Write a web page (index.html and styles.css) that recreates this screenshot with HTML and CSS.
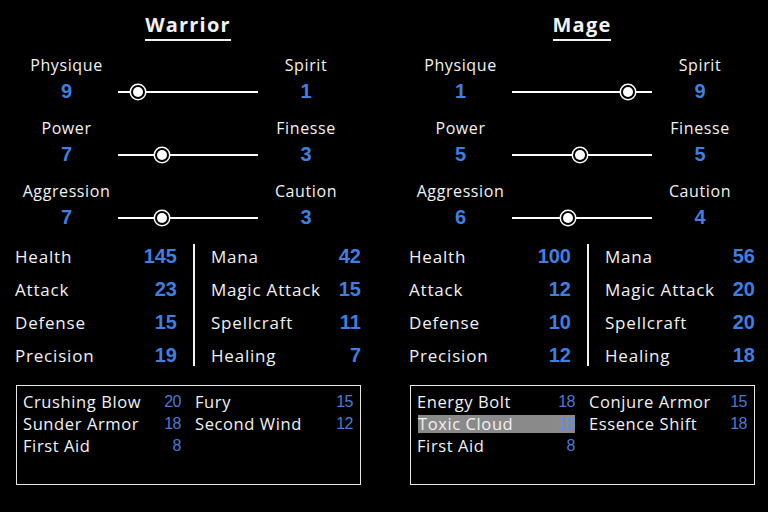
FILE: index.html
```html
<!DOCTYPE html>
<html>
<head>
    <meta name="viewport" content="width=device-width, initial-scale=1.0">
    <title>Class Compare</title>
    <link rel="stylesheet" href="styles.css">
</head>
<body>
    <div class="compare">

        <!-- Warrior -->
        <div class="panel">
            <div class="title"><span>Warrior</span></div>

            <div class="traits">
                <div class="name">Physique</div><div></div><div class="name">Spirit</div>
                <div class="num">9</div>
                <div class="track"><div class="knob" style="left: 14.2%"></div></div>
                <div class="num">1</div>

                <div class="name">Power</div><div></div><div class="name">Finesse</div>
                <div class="num">7</div>
                <div class="track"><div class="knob" style="left: 31.4%"></div></div>
                <div class="num">3</div>

                <div class="name">Aggression</div><div></div><div class="name">Caution</div>
                <div class="num">7</div>
                <div class="track"><div class="knob" style="left: 31.4%"></div></div>
                <div class="num">3</div>
            </div>

            <div class="stats">
                <div class="col">
                    <div class="stat"><span>Health</span><b>145</b></div>
                    <div class="stat"><span>Attack</span><b>23</b></div>
                    <div class="stat"><span>Defense</span><b>15</b></div>
                    <div class="stat"><span>Precision</span><b>19</b></div>
                </div>
                <div class="divider"></div>
                <div class="col">
                    <div class="stat"><span>Mana</span><b>42</b></div>
                    <div class="stat"><span>Magic Attack</span><b>15</b></div>
                    <div class="stat"><span>Spellcraft</span><b>11</b></div>
                    <div class="stat"><span>Healing</span><b>7</b></div>
                </div>
            </div>

            <div class="skills">
                <div class="skill"><span>Crushing Blow</span><b>20</b></div>
                <div class="skill"><span>Fury</span><b>15</b></div>
                <div class="skill"><span>Sunder Armor</span><b>18</b></div>
                <div class="skill"><span>Second Wind</span><b>12</b></div>
                <div class="skill"><span>First Aid</span><b>8</b></div>
            </div>
        </div>

        <!-- Mage -->
        <div class="panel">
            <div class="title"><span>Mage</span></div>

            <div class="traits">
                <div class="name">Physique</div><div></div><div class="name">Spirit</div>
                <div class="num">1</div>
                <div class="track"><div class="knob" style="left: 83%"></div></div>
                <div class="num">9</div>

                <div class="name">Power</div><div></div><div class="name">Finesse</div>
                <div class="num">5</div>
                <div class="track"><div class="knob" style="left: 48.6%"></div></div>
                <div class="num">5</div>

                <div class="name">Aggression</div><div></div><div class="name">Caution</div>
                <div class="num">6</div>
                <div class="track"><div class="knob" style="left: 40%"></div></div>
                <div class="num">4</div>
            </div>

            <div class="stats">
                <div class="col">
                    <div class="stat"><span>Health</span><b>100</b></div>
                    <div class="stat"><span>Attack</span><b>12</b></div>
                    <div class="stat"><span>Defense</span><b>10</b></div>
                    <div class="stat"><span>Precision</span><b>12</b></div>
                </div>
                <div class="divider"></div>
                <div class="col">
                    <div class="stat"><span>Mana</span><b>56</b></div>
                    <div class="stat"><span>Magic Attack</span><b>20</b></div>
                    <div class="stat"><span>Spellcraft</span><b>20</b></div>
                    <div class="stat"><span>Healing</span><b>18</b></div>
                </div>
            </div>

            <div class="skills">
                <div class="skill"><span>Energy Bolt</span><b>18</b></div>
                <div class="skill"><span>Conjure Armor</span><b>15</b></div>
                <div class="skill selected"><span>Toxic Cloud</span><b>18</b></div>
                <div class="skill"><span>Essence Shift</span><b>18</b></div>
                <div class="skill"><span>First Aid</span><b>8</b></div>
            </div>
        </div>

    </div>
</body>
</html>
```

FILE: styles.css
```css
body {
    margin: 0;
    background-color: #000;
    color: #f2f2f2;
    font-family: "Open Sans", "DejaVu Sans", sans-serif;
}

.compare {
    display: grid;
    grid-template-columns: 346px 346px;
    column-gap: 48px;
    padding: 12px 0 0 15px;
}

/* Class name heading */
.title {
    text-align: center;
    font-size: 20px;
    font-weight: bold;
    letter-spacing: 1.2px;
    line-height: 26px;
}

.title span {
    display: inline-block;
    padding-bottom: 1px;
    border-bottom: 2px solid #f2f2f2;
}

/* Trait sliders: name row, then value row with the track */
.traits {
    display: grid;
    grid-template-columns: 103px 140px 96px;
    grid-auto-rows: 22px 41px;
    margin-top: 13px;
}

.traits .name {
    text-align: center;
    font-size: 16px;
    letter-spacing: 0.6px;
    line-height: 22px;
}

.traits .num {
    text-align: center;
    font-family: "Liberation Sans", Arial, sans-serif;
    font-weight: bold;
    font-size: 20px;
    line-height: 30px;
    color: #3f7fe0;
}

.track {
    position: relative;
    align-self: start;
    height: 2px;
    margin-top: 15px;
    background-color: #fff;
}

.knob {
    position: absolute;
    top: 50%;
    width: 10px;
    height: 10px;
    border-radius: 50%;
    background-color: #fff;
    box-shadow: 0 0 0 2px #000, 0 0 0 3.5px #fff;
    transform: translate(-50%, -50%);
}

/* Derived stats */
.stats {
    display: grid;
    grid-template-columns: 162px 2px 1fr;
    column-gap: 16px;
    margin-top: -3px;
}

.stat {
    display: flex;
    justify-content: space-between;
    align-items: center;
    height: 33px;
}

.stat span {
    font-size: 17px;
    letter-spacing: 0.8px;
}

.stat b {
    font-family: "Liberation Sans", Arial, sans-serif;
    font-size: 20px;
    color: #3f7fe0;
}

.divider {
    background-color: #f2f2f2;
    margin: 4px 0 6px;
}

/* Skill list */
.skills {
    display: grid;
    grid-template-columns: 1fr 1fr;
    grid-auto-rows: 18px;
    column-gap: 14px;
    row-gap: 4px;
    align-content: start;
    height: 86px;
    margin-top: 13px;
    margin-left: 1px;
    padding: 7px 7px 5px 6px;
    border: 1px solid #e6e6e6;
}

.skill {
    display: flex;
    justify-content: space-between;
    align-items: center;
    font-size: 16.5px;
    letter-spacing: 0.6px;
    line-height: 18px;
}

.skill b {
    font-family: "Liberation Sans", Arial, sans-serif;
    font-weight: normal;
    font-size: 16px;
    letter-spacing: -0.5px;
    color: #4a7ad6;
}

.skill.selected {
    background-color: #8a8a8a;
    margin-left: 1px;
}

.skill.selected b {
    color: #5d8fe6;
}
```
